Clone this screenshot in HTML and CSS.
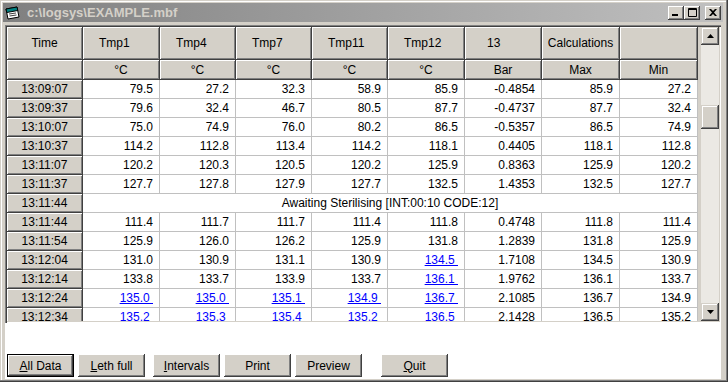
FILE: index.html
```html
<!DOCTYPE html>
<html lang="en">

<head>
  <meta charset="UTF-8" />
  <meta name="viewport" content="width=device-width, initial-scale=1.0" />
  <title>EXAMPLE.mbf</title>
  <link rel="stylesheet" href="styles.css">
</head>

<body>
  <div class="window">
    <div class="titlebar">
      <svg class="app-icon" width="16" height="16" viewBox="0 0 16 16">
        <path d="M1 4 L12 2 L14 12 L3 14 Z" fill="#fff" stroke="#000" stroke-width="1" />
        <path d="M1 4 L12 2 L12.8 5.5 L1.8 7.5 Z" fill="#008080" stroke="#000" stroke-width="1" />
        <path d="M4 9 L11 8 M4.5 11 L11.5 10" stroke="#404040" stroke-width="1" />
      </svg>
      <span class="title">c:\logsys\EXAMPLE.mbf</span>
      <span class="caption-btn">
        <svg width="8" height="7" viewBox="0 0 8 7"><rect x="0" y="5" width="6" height="2" fill="#000" /></svg>
      </span>
      <span class="caption-btn">
        <svg width="9" height="9" viewBox="0 0 9 9"><path d="M0.5 0.5 H8.5 V8.5 H0.5 Z M0.5 1.5 H8.5" fill="none" stroke="#000" stroke-width="1" /></svg>
      </span>
      <span class="caption-btn close">
        <svg width="8" height="7" viewBox="0 0 8 7"><path d="M0 0 L2 0 L4 2 L6 0 L8 0 L5 3.5 L8 7 L6 7 L4 5 L2 7 L0 7 L3 3.5 Z" fill="#000" /></svg>
      </span>
    </div>

    <div class="client">
      <div class="grid">
        <div class="grid-view">
          <table class="data">
            <colgroup>
              <col style="width:76px"><col style="width:77px"><col style="width:76px"><col style="width:76px">
              <col style="width:76px"><col style="width:77px"><col style="width:77px"><col style="width:78px">
              <col style="width:78px">
            </colgroup>
            <tr class="head">
              <th class="fixed center">Time</th>
              <th class="fixed">Tmp1</th>
              <th class="fixed">Tmp4</th>
              <th class="fixed">Tmp7</th>
              <th class="fixed">Tmp11</th>
              <th class="fixed">Tmp12</th>
              <th class="fixed pad-wide">13</th>
              <th class="fixed center">Calculations</th>
              <th class="fixed"></th>
            </tr>
            <tr class="units">
              <th class="fixed"></th>
              <th class="fixed">°C</th>
              <th class="fixed">°C</th>
              <th class="fixed">°C</th>
              <th class="fixed">°C</th>
              <th class="fixed">°C</th>
              <th class="fixed">Bar</th>
              <th class="fixed">Max</th>
              <th class="fixed">Min</th>
            </tr>
            <tr>
              <td class="fixed">13:09:07</td>
              <td>79.5</td><td>27.2</td><td>32.3</td><td>58.9</td><td>85.9</td><td>-0.4854</td><td>85.9</td><td>27.2</td>
            </tr>
            <tr>
              <td class="fixed">13:09:37</td>
              <td>79.6</td><td>32.4</td><td>46.7</td><td>80.5</td><td>87.7</td><td>-0.4737</td><td>87.7</td><td>32.4</td>
            </tr>
            <tr>
              <td class="fixed">13:10:07</td>
              <td>75.0</td><td>74.9</td><td>76.0</td><td>80.2</td><td>86.5</td><td>-0.5357</td><td>86.5</td><td>74.9</td>
            </tr>
            <tr>
              <td class="fixed">13:10:37</td>
              <td>114.2</td><td>112.8</td><td>113.4</td><td>114.2</td><td>118.1</td><td>0.4405</td><td>118.1</td><td>112.8</td>
            </tr>
            <tr>
              <td class="fixed">13:11:07</td>
              <td>120.2</td><td>120.3</td><td>120.5</td><td>120.2</td><td>125.9</td><td>0.8363</td><td>125.9</td><td>120.2</td>
            </tr>
            <tr>
              <td class="fixed">13:11:37</td>
              <td>127.7</td><td>127.8</td><td>127.9</td><td>127.7</td><td>132.5</td><td>1.4353</td><td>132.5</td><td>127.7</td>
            </tr>
            <tr>
              <td class="fixed">13:11:44</td>
              <td class="note" colspan="8">Awaiting Sterilising [INT:00:10 CODE:12]</td>
            </tr>
            <tr>
              <td class="fixed">13:11:44</td>
              <td>111.4</td><td>111.7</td><td>111.7</td><td>111.4</td><td>111.8</td><td>0.4748</td><td>111.8</td><td>111.4</td>
            </tr>
            <tr>
              <td class="fixed">13:11:54</td>
              <td>125.9</td><td>126.0</td><td>126.2</td><td>125.9</td><td>131.8</td><td>1.2839</td><td>131.8</td><td>125.9</td>
            </tr>
            <tr>
              <td class="fixed">13:12:04</td>
              <td>131.0</td><td>130.9</td><td>131.1</td><td>130.9</td><td><span class="flag">134.5&nbsp;</span></td><td>1.7108</td><td>134.5</td><td>130.9</td>
            </tr>
            <tr>
              <td class="fixed">13:12:14</td>
              <td>133.8</td><td>133.7</td><td>133.9</td><td>133.7</td><td><span class="flag">136.1&nbsp;</span></td><td>1.9762</td><td>136.1</td><td>133.7</td>
            </tr>
            <tr>
              <td class="fixed">13:12:24</td>
              <td><span class="flag">135.0&nbsp;</span></td><td><span class="flag">135.0&nbsp;</span></td><td><span class="flag">135.1&nbsp;</span></td><td><span class="flag">134.9&nbsp;</span></td><td><span class="flag">136.7&nbsp;</span></td><td>2.1085</td><td>136.7</td><td>134.9</td>
            </tr>
            <tr>
              <td class="fixed">13:12:34</td>
              <td><span class="flag">135.2&nbsp;</span></td><td><span class="flag">135.3&nbsp;</span></td><td><span class="flag">135.4&nbsp;</span></td><td><span class="flag">135.2&nbsp;</span></td><td><span class="flag">136.5&nbsp;</span></td><td>2.1428</td><td>136.5</td><td>135.2</td>
            </tr>
          </table>
        </div>

        <div class="vscroll">
          <div class="scroll-btn">
            <svg width="7" height="4" viewBox="0 0 7 4"><path d="M3.5 0 L7 4 L0 4 Z" fill="#000" /></svg>
          </div>
          <div class="track">
            <div class="thumb"></div>
          </div>
          <div class="scroll-btn">
            <svg width="7" height="4" viewBox="0 0 7 4"><path d="M0 0 L7 0 L3.5 4 Z" fill="#000" /></svg>
          </div>
        </div>
      </div>

      <div class="actions">
        <button class="default"><u>A</u>ll Data</button>
        <button><u>L</u>eth full</button>
        <button class="spaced"><u>I</u>ntervals</button>
        <button>Print</button>
        <button>Preview</button>
        <button class="apart"><u>Q</u>uit</button>
      </div>
    </div>
  </div>
</body>

</html>
```

FILE: styles.css
```css
* {
  box-sizing: border-box;
}

body {
  margin: 0;
  font-family: "Liberation Sans", Arial, sans-serif;
  font-size: 12px;
  background-color: #d4d0c8;
}

.window {
  width: 728px;
  height: 382px;
  padding: 3px 7px 3px 3px;
  display: flex;
  flex-direction: column;
  background-color: #d4d0c8;
  box-shadow: inset -1px -1px #404040, inset -2px -2px #808080, inset 1px 1px #d4d0c8, inset 2px 2px #fff;
}

/* caption */
.titlebar {
  height: 19px;
  margin-right: -2px;
  padding: 0 2px;
  display: flex;
  align-items: center;
  background: linear-gradient(to right, #808080, #c0c0c0);
  color: #d4d0c8;
  font-weight: bold;
}

.app-icon {
  margin-right: 6px;
}

.title {
  flex: 1;
  font-size: 13px;
}

.caption-btn {
  width: 16px;
  height: 14px;
  display: flex;
  align-items: center;
  justify-content: center;
  background-color: #d4d0c8;
  box-shadow: inset -1px -1px #404040, inset 1px 1px #fff, inset -2px -2px #808080;
}

.caption-btn.close {
  margin-left: 5px;
}

/* client area */
.client {
  flex: 1;
  margin: 3px 0 0 2px;
  display: flex;
  flex-direction: column;
  background-color: #fff;
}

.grid {
  height: 298px;
  padding: 2px;
  display: flex;
  background-color: #d4d0c8;
  box-shadow: inset 1px 1px #808080, inset 2px 2px #404040, inset -1px -1px #fff, inset -2px -2px #d4d0c8;
}

.grid-view {
  width: 694px;
  overflow: hidden;
}

table.data {
  width: 691px;
  table-layout: fixed;
  border-collapse: separate;
  border-spacing: 0;
  background-color: #fff;
}

.data th,
.data td {
  height: 19px;
  padding: 0 6px 0 0;
  font-weight: normal;
  text-align: right;
  white-space: nowrap;
  border-right: 1px solid #c0c0c0;
  border-bottom: 1px solid #c0c0c0;
}

.data .fixed {
  padding: 0;
  text-align: center;
  background-color: #d4d0c8;
  border-right: 1px solid #404040;
  border-bottom: 1px solid #404040;
  box-shadow: inset 1px 1px #fff, inset -1px -1px #808080;
}

.data .head th {
  height: 33px;
  padding-left: 16px;
  text-align: left;
}

.data .head th.center {
  padding-left: 0;
  text-align: center;
}

.data .head th.pad-wide {
  padding-left: 22px;
}

.data .units th {
  height: 20px;
}

.data td.note {
  padding: 0;
  text-align: center;
}

.flag {
  color: #0000ff;
  text-decoration: underline;
}

/* scrollbar */
.vscroll {
  width: 18px;
  display: flex;
  flex-direction: column;
}

.scroll-btn {
  height: 18px;
  display: flex;
  align-items: center;
  justify-content: center;
  background-color: #d4d0c8;
  box-shadow: inset -1px -1px #404040, inset 1px 1px #d4d0c8, inset -2px -2px #808080, inset 2px 2px #fff;
}

.track {
  flex: 1;
  background-color: #ebe9e4;
}

.thumb {
  height: 24px;
  margin-top: 60px;
  background-color: #d4d0c8;
  box-shadow: inset -1px -1px #404040, inset 1px 1px #d4d0c8, inset -2px -2px #808080, inset 2px 2px #fff;
}

/* command buttons */
.actions {
  margin-top: auto;
  padding: 0 0 2px 2px;
  display: flex;
  gap: 4px;
}

button {
  width: 67px;
  height: 23px;
  padding: 0;
  border: none;
  font-family: "Liberation Sans", Arial, sans-serif;
  font-size: 12px;
  color: #000;
  background-color: #d4d0c8;
  box-shadow: inset -1px -1px #404040, inset 1px 1px #fff, inset -2px -2px #808080, inset 2px 2px #d4d0c8;
}

button.default {
  border: 1px solid #000;
}

button.spaced {
  margin-left: 4px;
}

button.apart {
  margin-left: 15px;
}
```
